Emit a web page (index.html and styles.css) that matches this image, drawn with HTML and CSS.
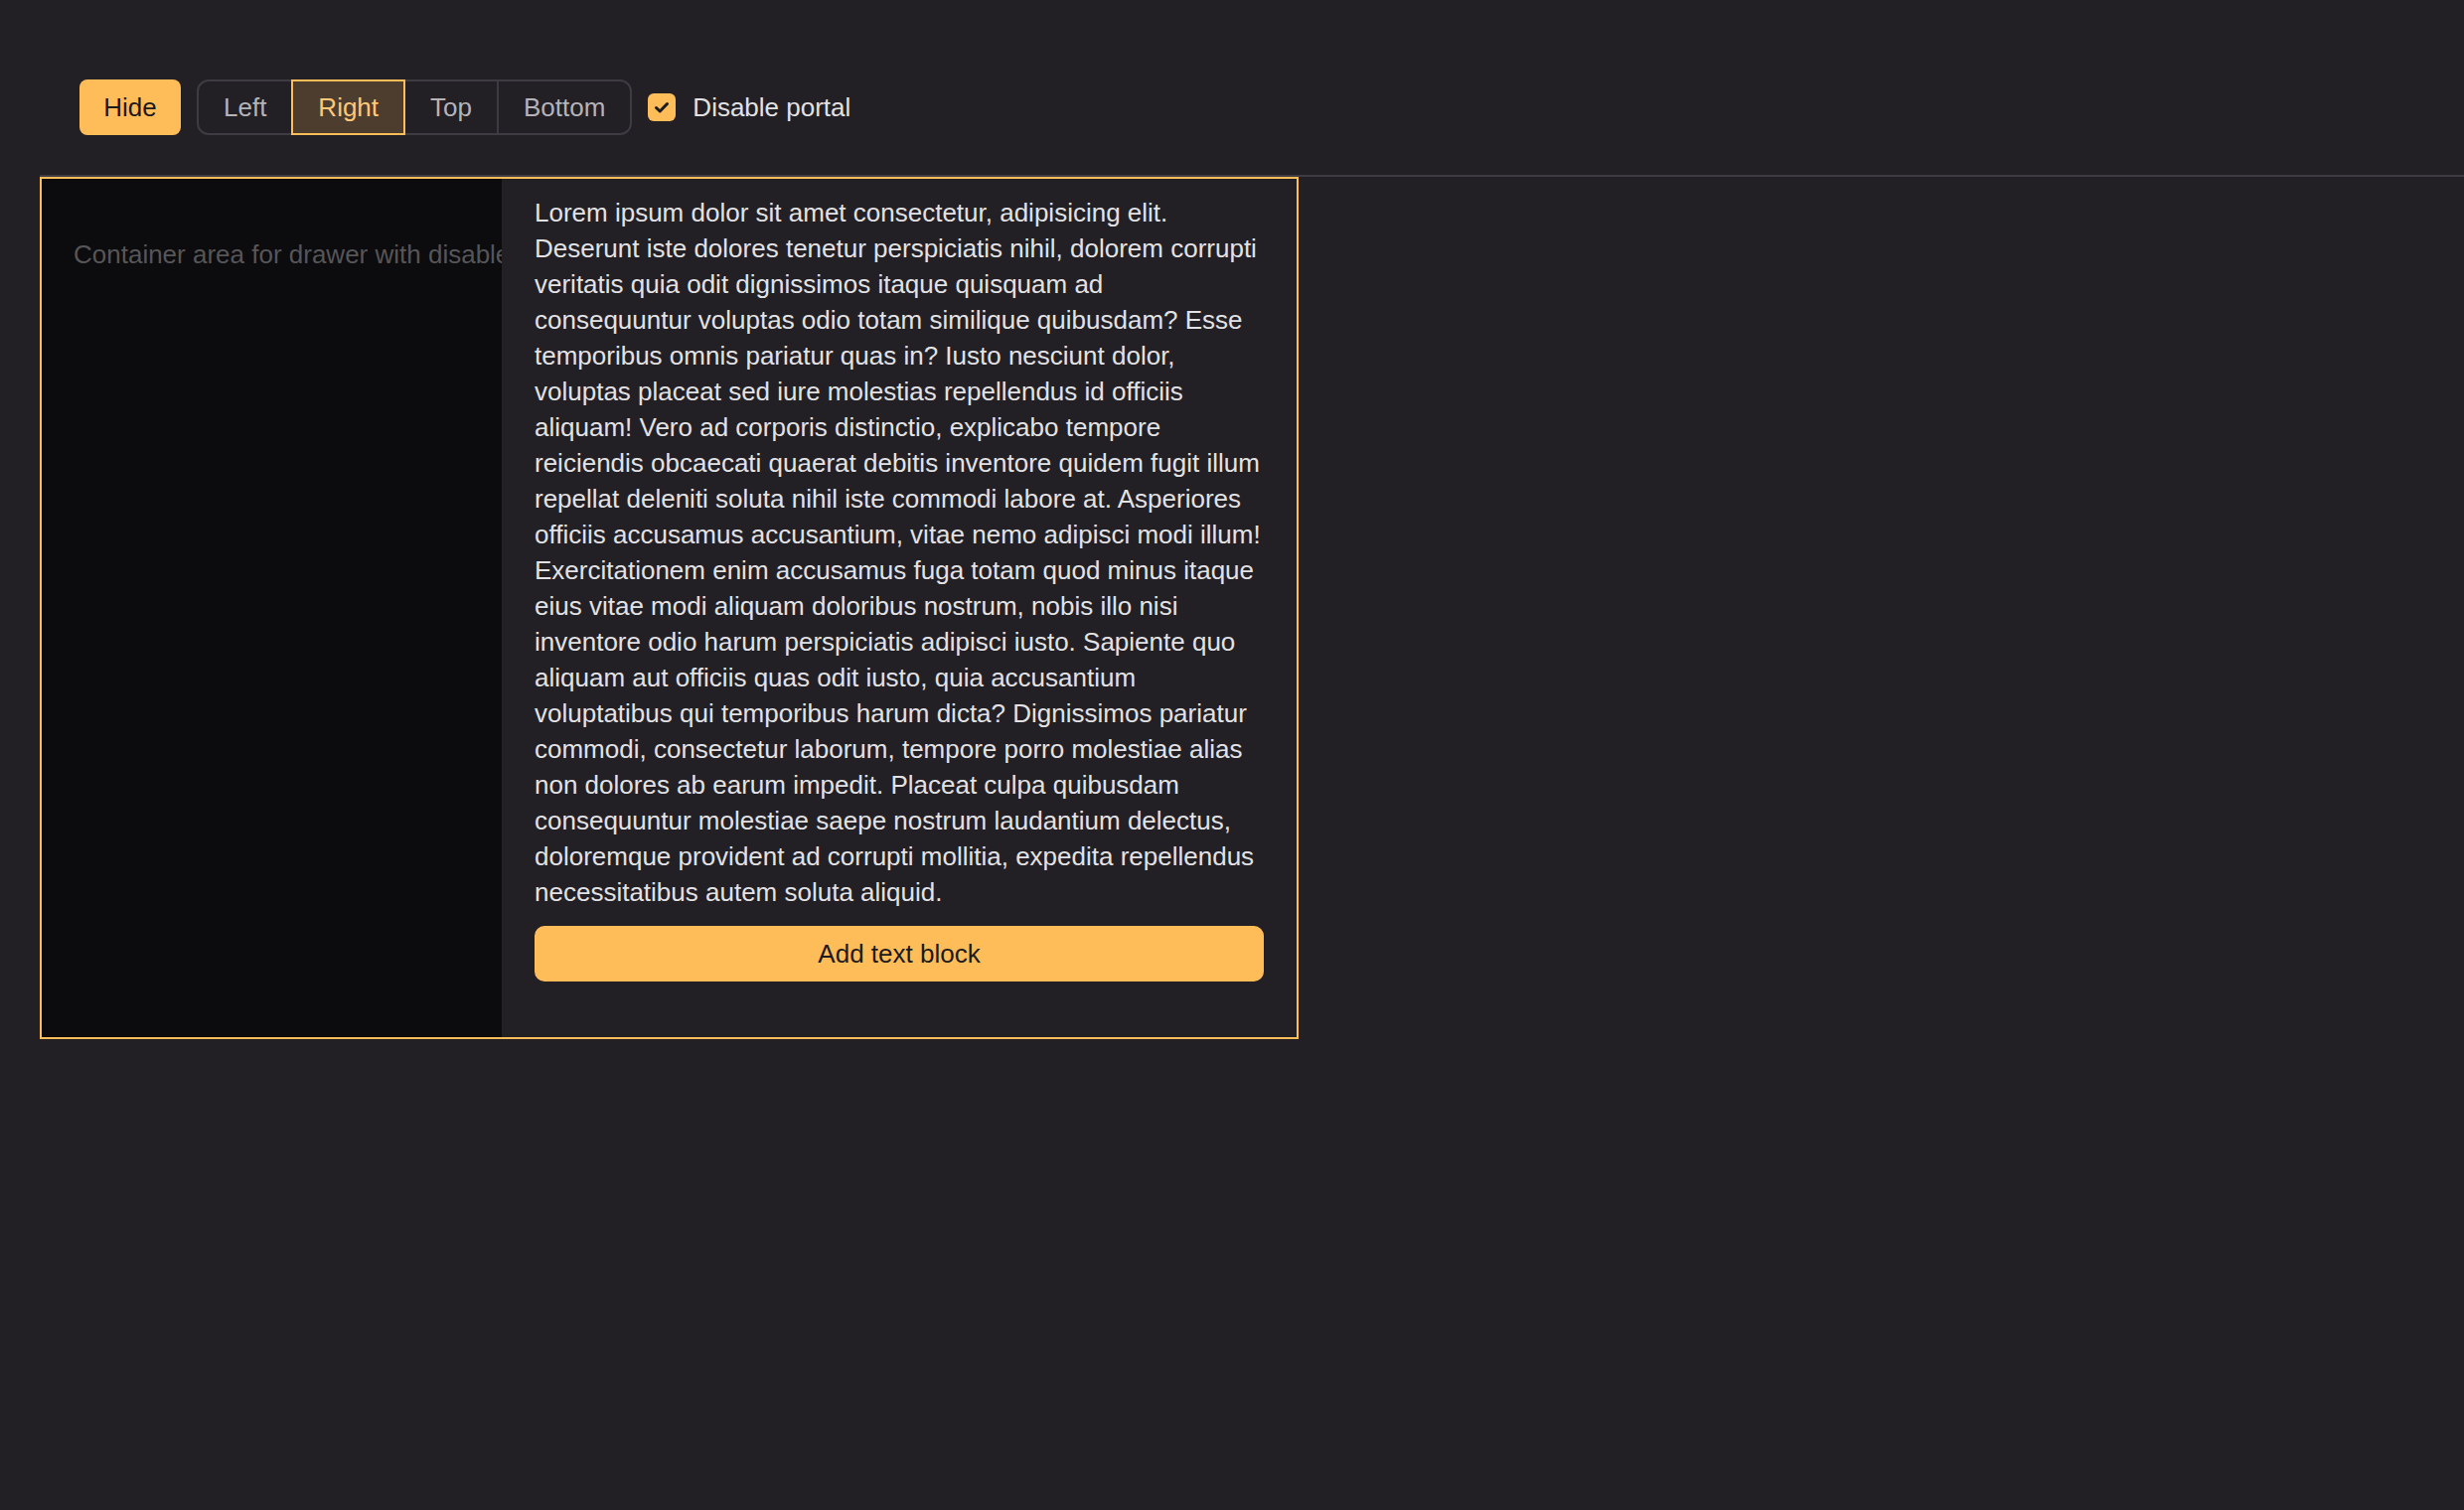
FILE: index.html
```html
<!DOCTYPE html>
<html>
<head>
<meta charset="utf-8">
<link rel="stylesheet" href="styles.css">
</head>
<body>
<div class="page">
  <div class="toolbar">
    <button class="btn-primary">Hide</button>
    <div class="segmented">
      <button class="seg first">Left</button>
      <button class="seg active">Right</button>
      <button class="seg">Top</button>
      <button class="seg last">Bottom</button>
    </div>
    <label class="check">
      <span class="box"><svg width="28" height="28" viewBox="0 0 28 28"><path d="M8.5 14.5 L12.2 18 L19.5 10.5" fill="none" stroke="#1b1a1c" stroke-width="3" stroke-linecap="round" stroke-linejoin="round"/></svg></span>
      <span class="check-label">Disable portal</span>
    </label>
  </div>
  <div class="stage">
    <div class="container">
      <p class="container-text">Container area for drawer with disabled portal</p>
      <div class="drawer">
        <p class="drawer-text">Lorem ipsum dolor sit amet consectetur, adipisicing elit. Deserunt iste dolores tenetur perspiciatis nihil, dolorem corrupti veritatis quia odit dignissimos itaque quisquam ad consequuntur voluptas odio totam similique quibusdam? Esse temporibus omnis pariatur quas in? Iusto nesciunt dolor, voluptas placeat sed iure molestias repellendus id officiis aliquam! Vero ad corporis distinctio, explicabo tempore reiciendis obcaecati quaerat debitis inventore quidem fugit illum repellat deleniti soluta nihil iste commodi labore at. Asperiores officiis accusamus accusantium, vitae nemo adipisci modi illum! Exercitationem enim accusamus fuga totam quod minus itaque eius vitae modi aliquam doloribus nostrum, nobis illo nisi inventore odio harum perspiciatis adipisci iusto. Sapiente quo aliquam aut officiis quas odit iusto, quia accusantium voluptatibus qui temporibus harum dicta? Dignissimos pariatur commodi, consectetur laborum, tempore porro molestiae alias non dolores ab earum impedit. Placeat culpa quibusdam consequuntur molestiae saepe nostrum laudantium delectus, doloremque provident ad corrupti mollitia, expedita repellendus necessitatibus autem soluta aliquid.</p>
        <button class="btn-block">Add text block</button>
      </div>
    </div>
  </div>
</div>
</body>
</html>
```

FILE: styles.css
```css
html, body {
  margin: 0;
  padding: 0;
  background: #221f25;
  font-family: "Liberation Sans", Arial, sans-serif;
  height: 100%;
}

.page {
  padding: 40px 0 0 40px;
}

.toolbar {
  display: flex;
  align-items: center;
  gap: 16px;
  padding: 40px;
  border-bottom: 2px solid #3e3b42;
}

button {
  font-family: inherit;
  font-size: 26px;
  cursor: pointer;
}

.btn-primary {
  height: 56px;
  padding: 0 24.25px;
  border: none;
  border-radius: 8px;
  background: #ffbd59;
  color: #1b1a1c;
}

.segmented {
  display: flex;
}

.seg {
  height: 56px;
  padding: 0 25px;
  border: 2px solid #3e3b42;
  background: transparent;
  color: #b4b3b8;
  margin-left: -2px;
  position: relative;
}

.seg.first {
  margin-left: 0;
  border-radius: 12px 0 0 12px;
}

.seg.last {
  border-radius: 0 12px 12px 0;
}

.seg.active {
  border-color: #ffbd59;
  background: #4d3d2e;
  color: #ffc878;
  z-index: 1;
}

.check {
  display: flex;
  align-items: center;
  gap: 17px;
}

.box {
  width: 28px;
  height: 28px;
  border-radius: 6px;
  background: #ffbd59;
  display: block;
}

.box svg {
  display: block;
}

.check-label {
  font-size: 26px;
  color: #e2e2e4;
}

.container {
  position: relative;
  box-sizing: border-box;
  width: 1267px;
  height: 868px;
  border: 2px solid #ffbd59;
  background: #0c0b0d;
  overflow: hidden;
}

.container-text {
  margin: 0;
  box-sizing: border-box;
  width: 463px;
  overflow: hidden;
  padding: 58px 0 0 32px;
  font-size: 26px;
  line-height: 36px;
  color: #565558;
  white-space: nowrap;
}

.drawer {
  position: absolute;
  top: 0;
  right: 0;
  bottom: 0;
  width: 800px;
  box-sizing: border-box;
  padding: 16px 33px;
  background: #221f25;
  display: flex;
  flex-direction: column;
  gap: 16px;
}

.drawer-text {
  margin: 0;
  font-size: 26px;
  line-height: 36px;
  color: #e2e2e4;
}

.btn-block {
  height: 56px;
  width: 100%;
  border: none;
  border-radius: 10px;
  background: #ffbd59;
  color: #1b1a1c;
}
```
